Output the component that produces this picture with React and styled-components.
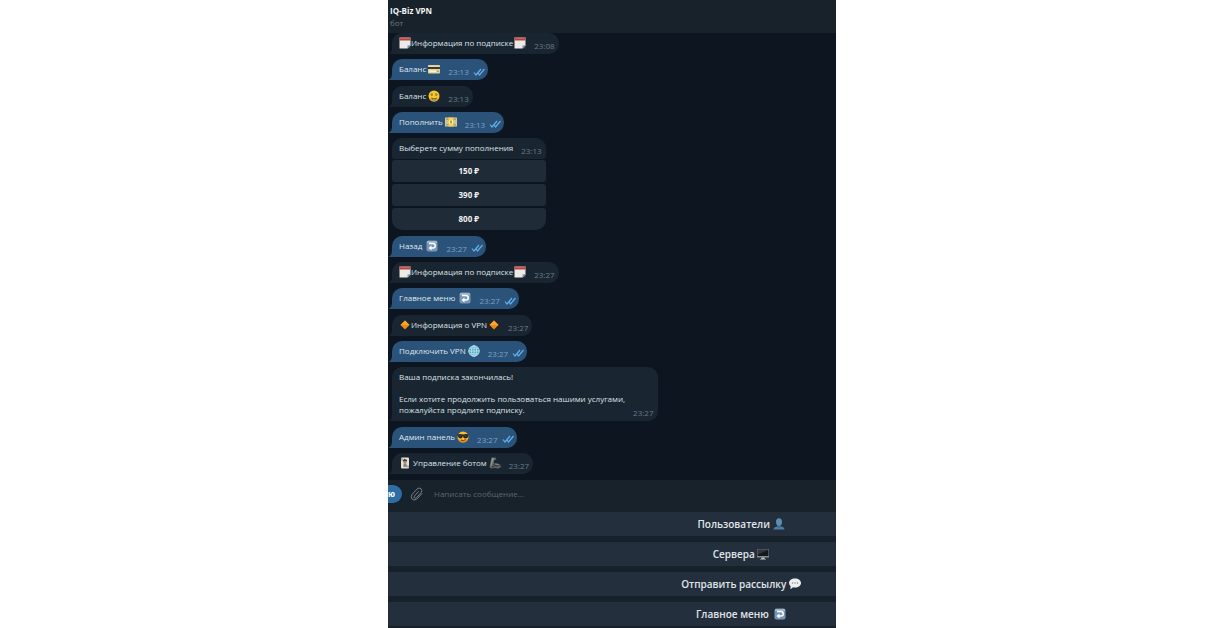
import React from 'react';
import styled, { createGlobalStyle } from 'styled-components';

const GlobalStyle = createGlobalStyle`
    * {
        box-sizing: border-box;
    }
    body {
        margin: 0;
        background: #ffffff;
        font-family: "Open Sans", "Noto Sans", sans-serif;
    }
    button, input {
        font-family: inherit;
        border: none;
        margin: 0;
    }
`;
const Page = styled.div`
    display: flex;
    justify-content: center;
`;
const Messenger = styled.main`
    display: flex;
    flex-direction: column;
    width: 100%;
    max-width: 448px;
    min-height: 100vh;
    overflow: hidden;
    background: #0d1520;
`;
const Header = styled.header`
    padding: 5px 2px 4px;
    background: #18222b;
    h1 {
        margin: 0;
        color: #f0f3f5;
        font-size: 8px;
        line-height: 12px;
        font-weight: 700;
    }
    p {
        margin: 0;
        color: #6b7986;
        font-size: 8px;
        line-height: 12px;
    }
`;
const Chat = styled.section`
    display: flex;
    flex: 1;
    flex-direction: column;
    align-items: flex-start;
    justify-content: space-between;
    padding: 0 4px 6px;
`;
const Group = styled.div`
    display: flex;
    flex-direction: column;
    gap: 1px;
`;
const Bubble = styled.div`
    position: relative;
    display: flex;
    align-items: flex-end;
    gap: 8px;
    padding: 4px ${props => (props.$out ? 3 : 4)}px 6px 7px;
    border-radius: ${props => (props.$attached ? '10px 10px 3px 3px' : '10px 10px 10px 0')};
    background: ${props => (props.$out ? '#2b5278' : '#192631')};
    color: ${props => (props.$out ? '#dfe9f2' : '#dde2e6')};
`;
const Tail = styled.svg`
    position: absolute;
    left: -4px;
    bottom: 0;
    width: 4px;
    height: 7px;
    fill: ${props => (props.$out ? '#2b5278' : '#192631')};
`;
const Text = styled.div`
    font-size: 8px;
    line-height: 11px;
    white-space: pre-line;
`;
const Meta = styled.div`
    display: flex;
    align-items: center;
    gap: 4px;
    height: 11px;
    margin-bottom: -3px;
    color: ${props => (props.$out ? '#7ba3c9' : '#6b7a87')};
    font-size: 8px;
    line-height: 11px;
    svg {
        width: 12px;
        height: 8px;
    }
`;
const Icon = styled.svg`
    width: 12px;
    height: 12px;
    margin: -2px 0 -2px ${props => (props.$spaced ? 1 : 0)}px;
    vertical-align: -1px;
`;
const InlineKeyboard = styled.div`
    display: flex;
    flex-direction: column;
    gap: 2px;
`;
const InlineButton = styled.button`
    height: 22px;
    padding: 0 0 2px;
    border-radius: 3px;
    background: #1f2b37;
    color: #eef1f4;
    font-size: 8px;
    font-weight: 700;
    &:last-child {
        border-radius: 3px 3px 10px 10px;
    }
`;
const Composer = styled.form`
    display: flex;
    align-items: center;
    height: 32px;
    padding-bottom: 4px;
    background: #18222b;
`;
const MenuButton = styled.button`
    width: 14px;
    height: 18px;
    padding: 0 7px 0 0;
    border-radius: 0 9px 9px 0;
    background: #2f6ea5;
    color: #ffffff;
    font-size: 8px;
    font-weight: 700;
    line-height: 18px;
`;
const AttachButton = styled.button`
    display: flex;
    margin: 0 11px 0 8px;
    padding: 0;
    background: none;
    color: #75808a;
`;
const MessageInput = styled.input`
    flex: 1;
    min-width: 0;
    height: 20px;
    padding: 0 0 2px;
    background: none;
    outline: none;
    color: #dde2e6;
    font-size: 8px;
    &::placeholder {
        color: #5c6772;
        opacity: 1;
    }
`;
const ReplyKeyboard = styled.div`
    display: flex;
    flex-direction: column;
    gap: 6px;
    padding-bottom: 2px;
    background: #17212a;
`;
const ReplyKey = styled.button`
    height: 24px;
    padding: 0 0 0 258px;
    background: #242f3d;
    color: #e0e5e9;
    font-size: 10px;
    font-weight: 600;
    line-height: 24px;
    white-space: nowrap;
    svg {
        vertical-align: 0;
    }
`;

const drawings = {
    calendar: (
        <>
            <path d="M1 1h22v16l-6 6H1z" fill="#eceae8" />
            <path d="M1 1h22v6H1z" fill="#b5443f" />
            <path d="M3 3h18" stroke="#d98a84" strokeWidth="1" />
            <path d="M23 16l-6 7v-6z" fill="#8c9398" />
            <path d="M23 18v5h-5z" fill="#39434c" />
        </>
    ),
    card: (
        <>
            <rect x="0" y="4" width="24" height="17" rx="2" fill="#e3d59d" />
            <path d="M0 8h24v4H0z" fill="#3b3b32" />
            <path d="M3 15h13v3H3z" fill="#f8f4dc" />
            <path d="M18 15h4v3h-4z" fill="#b8a868" />
        </>
    ),
    money: (
        <>
            <circle cx="12" cy="12" r="11" fill="#f9c62f" />
            <path d="M2 16a11 11 0 0 0 20 0q-10 4-20 0z" fill="#eda023" />
            <ellipse cx="7.500" cy="9" rx="2.500" ry="3" fill="#a08a2c" />
            <ellipse cx="16.500" cy="9" rx="2.500" ry="3" fill="#a08a2c" />
            <path d="M6 15q6 2 12 0q-1 5-6 5t-6-5z" fill="#8a4517" />
            <path d="M9 17h6v6H9z" fill="#8fa757" />
        </>
    ),
    banknote: (
        <>
            <rect x="0" y="3" width="24" height="18" rx="1" fill="#d6cb94" />
            <rect x="2" y="5" width="20" height="14" fill="#a8a079" />
            <path d="M7 3h10v18H7z" fill="#f3cf47" />
            <circle cx="12" cy="12" r="5" fill="#fff0a8" />
            <path d="M10 9h4v6h-4z" fill="#c39a30" />
            <path d="M4 8v8M20 8v8" stroke="#eee7bd" strokeWidth="2" />
        </>
    ),
    back: (
        <>
            <rect x="1" y="1" width="22" height="22" rx="4" fill="#7897b5" />
            <path d="M2 3q0-1 2-1h16q2 0 2 1v3H2z" fill="#9eb5cb" />
            <path d="M6 7h8a4 4 0 0 1 0 9H9" fill="none" stroke="#ffffff" strokeWidth="3" />
            <path d="M11 11v10l-6-5z" fill="#ffffff" />
        </>
    ),
    diamond: (
        <>
            <path d="M12 3l9 9-9 9-9-9z" fill="#f08a14" />
            <path d="M12 3l9 9H3z" fill="#fba52c" />
        </>
    ),
    globe: (
        <>
            <circle cx="12" cy="12" r="11" fill="#4ba7c8" />
            <g fill="none" stroke="#c4e7ef" strokeWidth="1.500">
                <circle cx="12" cy="12" r="10.500" />
                <ellipse cx="12" cy="12" rx="5" ry="10.500" />
                <path d="M12 1v22M1 12h22M3 6.500h18M3 17.500h18" />
            </g>
        </>
    ),
    cool: (
        <>
            <circle cx="12" cy="12" r="11" fill="#f8bd2e" />
            <path d="M2 16a11 11 0 0 0 20 0q-10 5-20 0z" fill="#e48c1c" />
            <path d="M0 7q6-2 12 0q6-2 12 0l-1 1q-1 7-6 7t-5-6q-1 6-5 6T1 9z" fill="#2a2522" />
            <path d="M4 9l4 1M15 9l4 1" stroke="#77706a" />
            <path d="M8 18q5 3 9-1" stroke="#783b13" strokeWidth="2" fill="none" />
        </>
    ),
    joker: (
        <>
            <rect x="4" y="1" width="16" height="22" rx="2" fill="#e5dfd4" />
            <path d="M8 9q-1-4 2-4q1-3 3 0q4-1 3 4z" fill="#3e3936" />
            <circle cx="12" cy="11" r="3" fill="#a58879" />
            <path d="M9 14h6l1 6H9z" fill="#8b8480" />
            <path d="M6 3v4M18 17v4" stroke="#524d49" strokeWidth="1.500" />
        </>
    ),
    arm: (
        <>
            <path d="M5 1h8l2 4-5 2v6q8-2 13 3l1 4-5 3q-8-2-15 0l-3-3z" fill="#5f6467" />
            <path d="M6 2l5 1-3 4-3 10-2 2z" fill="#979b9c" />
            <path d="M9 15l5 3 7-1M6 20l5-2" stroke="#262c31" strokeWidth="2" fill="none" />
            <path d="M13 14l7 2" stroke="#a28e7b" strokeWidth="1.500" />
        </>
    ),
    user: (
        <>
            <path d="M1 23q0-5 7-6l1-3h6l1 3q7 1 7 6z" fill="#4f7fa3" />
            <ellipse cx="12" cy="8" rx="6" ry="7.500" fill="#5b8db0" />
            <path d="M9 15q3 2 6 0v3q-3 2-6 0z" fill="#376280" />
        </>
    ),
    screen: (
        <>
            <rect x="0" y="2" width="24" height="17" rx="1" fill="#85898c" />
            <rect x="1" y="3" width="22" height="13" fill="#16191c" />
            <path d="M2 4h20L2 13z" fill="#32363a" />
            <path d="M9 19h6l1 3h2v1H6v-1h2z" fill="#c1c4c6" />
        </>
    ),
    speech: (
        <>
            <path d="M12 1c7 0 12 4 12 9s-5 9-12 9q-2 0-4-.5Q5 22 2 22q2-2 1-6Q0 14 0 10c0-5 5-9 12-9z" fill="#eceeef" />
            <g fill="#858b90">
                <circle cx="7" cy="10" r="1.500" />
                <circle cx="12" cy="10" r="1.500" />
                <circle cx="17" cy="10" r="1.500" />
            </g>
        </>
    ),
};

function Emoji({ name, spaced }) {
    return (
        <Icon $spaced={spaced} viewBox="0 0 24 24" aria-hidden="true">
            {drawings[name]}
        </Icon>
    );
}

function Checks() {
    return (
        <svg viewBox="0 0 12 8" fill="none" stroke="#62b0ee" strokeWidth="1.200" aria-hidden="true">
            <path d="M1 4.500L3 7l5-6M5 5l1.500 2L11.500 1" />
        </svg>
    );
}

function Message({ out, attached, time, children }) {
    return (
        <Bubble $out={out} $attached={attached}>
            {!attached && (
                <Tail $out={out} viewBox="0 0 4 7" aria-hidden="true">
                    <path d="M4 0v7H0q4-1 4-7z" />
                </Tail>
            )}
            <Text>{children}</Text>
            <Meta $out={out}>
                <time>{time}</time>
                {out && <Checks />}
            </Meta>
        </Bubble>
    );
}

const prices = ['150 ₽', '390 ₽', '800 ₽'];

const replyKeys = [
    { label: 'Пользователи ', icon: 'user' },
    { label: 'Сервера ', icon: 'screen' },
    { label: 'Отправить рассылку ', icon: 'speech' },
    { label: 'Главное меню \u00a0', icon: 'back' },
];

function App() {
    return (
        <Page>
            <GlobalStyle />
            <Messenger>
                <Header>
                    <h1>IQ-Biz VPN</h1>
                    <p>бот</p>
                </Header>
                <Chat>
                    <Message time="23:08"><Emoji name="calendar" />Информация по подписке<Emoji name="calendar" spaced /></Message>
                    <Message out time="23:13">Баланс <Emoji name="card" /></Message>
                    <Message time="23:13">Баланс <Emoji name="money" /></Message>
                    <Message out time="23:13">Пополнить <Emoji name="banknote" /></Message>
                    <Group>
                        <Message attached time="23:13">Выберете сумму пополнения</Message>
                        <InlineKeyboard>
                            {prices.map(price => (
                                <InlineButton key={price} type="button">{price}</InlineButton>
                            ))}
                        </InlineKeyboard>
                    </Group>
                    <Message out time="23:27">Назад &nbsp;<Emoji name="back" /></Message>
                    <Message time="23:27"><Emoji name="calendar" />Информация по подписке<Emoji name="calendar" spaced /></Message>
                    <Message out time="23:27">Главное меню &nbsp;<Emoji name="back" /></Message>
                    <Message time="23:27"><Emoji name="diamond" />Информация о VPN<Emoji name="diamond" spaced /></Message>
                    <Message out time="23:27">Подключить VPN <Emoji name="globe" /></Message>
                    <Message time="23:27">
                        {'Ваша подписка закончилась!\n\nЕсли хотите продолжить пользоваться нашими услугами,\nпожалуйста продлите подписку.'}
                    </Message>
                    <Message out time="23:27">Админ панель <Emoji name="cool" /></Message>
                    <Message time="23:27"><Emoji name="joker" /> Управление ботом <Emoji name="arm" /></Message>
                </Chat>
                <Composer>
                    <MenuButton type="button">ю</MenuButton>
                    <AttachButton type="button" aria-label="Прикрепить файл">
                        <svg width="13" height="14" viewBox="0 0 13 14" fill="none" stroke="currentColor" strokeWidth="1" strokeLinecap="round" aria-hidden="true">
                            <path d="M8.500 4.500L4.500 9q-1 1.300 0 2t2-.3l4.500-5q1.700-2.500 0-4t-4 .3L2 7.500Q.3 10 2 12t4.500.3L12 6.500" />
                        </svg>
                    </AttachButton>
                    <MessageInput type="text" aria-label="Написать сообщение" placeholder="Написать сообщение..." />
                </Composer>
                <ReplyKeyboard>
                    {replyKeys.map(item => (
                        <ReplyKey key={item.label} type="button">
                            {item.label}<Emoji name={item.icon} />
                        </ReplyKey>
                    ))}
                </ReplyKeyboard>
            </Messenger>
        </Page>
    );
}

export default App;
